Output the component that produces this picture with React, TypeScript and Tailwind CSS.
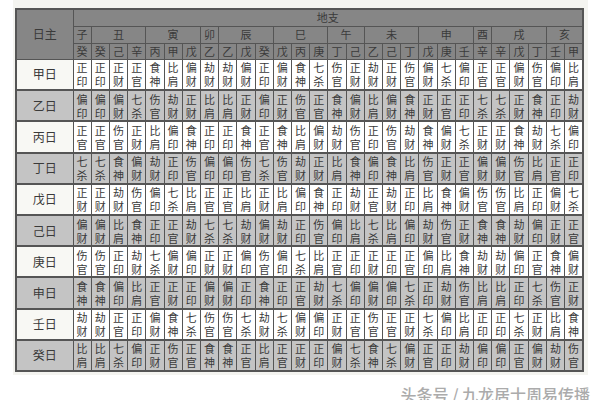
import React from 'react';

const STEMS = ['甲', '乙', '丙', '丁', '戊', '己', '庚', '辛', '壬', '癸'];

const BRANCHES: { name: string; hidden: string[] }[] = [
  { name: '子', hidden: ['癸'] },
  { name: '丑', hidden: ['癸', '己', '辛'] },
  { name: '寅', hidden: ['丙', '甲', '戊'] },
  { name: '卯', hidden: ['乙'] },
  { name: '辰', hidden: ['乙', '戊', '癸'] },
  { name: '巳', hidden: ['戊', '丙', '庚'] },
  { name: '午', hidden: ['丁', '己'] },
  { name: '未', hidden: ['乙', '己', '丁'] },
  { name: '申', hidden: ['戊', '庚', '壬'] },
  { name: '酉', hidden: ['辛'] },
  { name: '戌', hidden: ['辛', '戊', '丁'] },
  { name: '亥', hidden: ['壬', '甲'] },
];

// row label as printed (the 8th row is printed 申日), with the stem used for the lookup
const DAYS: { label: string; stem: number }[] = [
  { label: '甲日', stem: 0 },
  { label: '乙日', stem: 1 },
  { label: '丙日', stem: 2 },
  { label: '丁日', stem: 3 },
  { label: '戊日', stem: 4 },
  { label: '己日', stem: 5 },
  { label: '庚日', stem: 6 },
  { label: '申日', stem: 7 },
  { label: '壬日', stem: 8 },
  { label: '癸日', stem: 9 },
];

const GODS = [
  ['比肩', '劫财'],
  ['食神', '伤官'],
  ['偏财', '正财'],
  ['七杀', '正官'],
  ['偏印', '正印'],
];

function tenGod(day: number, other: number) {
  const rel = (Math.floor(other / 2) - Math.floor(day / 2) + 5) % 5;
  const same = day % 2 === other % 2;
  return GODS[rel][same ? 0 : 1];
}

const hiddenStems = BRANCHES.flatMap((b) => b.hidden.map((h) => STEMS.indexOf(h)));

const font = { fontFamily: '"Noto Sans CJK SC", "Noto Sans", sans-serif' };

export default function App() {
  return (
    <div className="w-[600px] h-[400px] overflow-hidden bg-white" style={font}>
      <div className="ml-[13px] w-[575px] bg-[#f4f4f0] pt-[8px] pb-[3px] pl-[2px]">
        <table className="w-[569px] table-fixed border-collapse border-2 border-[#555] text-[#3a3a3a]">
          <colgroup>
            <col className="w-[57px]" />
            {hiddenStems.map((_, i) => (
              <col key={i} />
            ))}
          </colgroup>
          <thead>
            <tr className="h-[17px] bg-[#868686]">
              <th rowSpan={3} className="border border-[#555] text-[12px] font-normal">
                日主
              </th>
              <th colSpan={28} className="border border-[#555] text-[11px] font-normal leading-[15px]">
                地支
              </th>
            </tr>
            <tr className="h-[17px] bg-[#868686]">
              {BRANCHES.map((b) => (
                <th
                  key={b.name}
                  colSpan={b.hidden.length}
                  className="border border-[#555] p-0 text-[11px] font-normal leading-[15px]"
                >
                  {b.name}
                </th>
              ))}
            </tr>
            <tr className="h-[16px] bg-[#868686]">
              {hiddenStems.map((s, i) => (
                <th key={i} className="border border-[#555] p-0 text-[11px] font-normal leading-[14px]">
                  {STEMS[s]}
                </th>
              ))}
            </tr>
          </thead>
          <tbody>
            {DAYS.map((d, r) => {
              const odd = r % 2 === 1;
              return (
                <tr key={d.label} className={`h-[31.2px] ${odd ? 'bg-[#c4c4c4]' : 'bg-white'}`}>
                  <td
                    className={`border border-b-2 border-[#555] text-center text-[12px] ${
                      odd ? '' : 'bg-[#f8f8f4]'
                    }`}
                  >
                    {d.label}
                  </td>
                  {hiddenStems.map((s, i) => {
                    const g = tenGod(d.stem, s);
                    return (
                      <td
                        key={i}
                        className="border border-b-2 border-[#555] p-0 text-center text-[11px] leading-[14px]"
                      >
                        {g[0]}
                        <br />
                        {g[1]}
                      </td>
                    );
                  })}
                </tr>
              );
            })}
          </tbody>
        </table>
      </div>
      <div className="flex justify-end pr-[10px] pt-[11px]">
        <span className="text-[16px] leading-[16px] font-medium text-[#ababab] whitespace-nowrap">
          头条号 / 九龙居士周易传播
        </span>
      </div>
    </div>
  );
}
